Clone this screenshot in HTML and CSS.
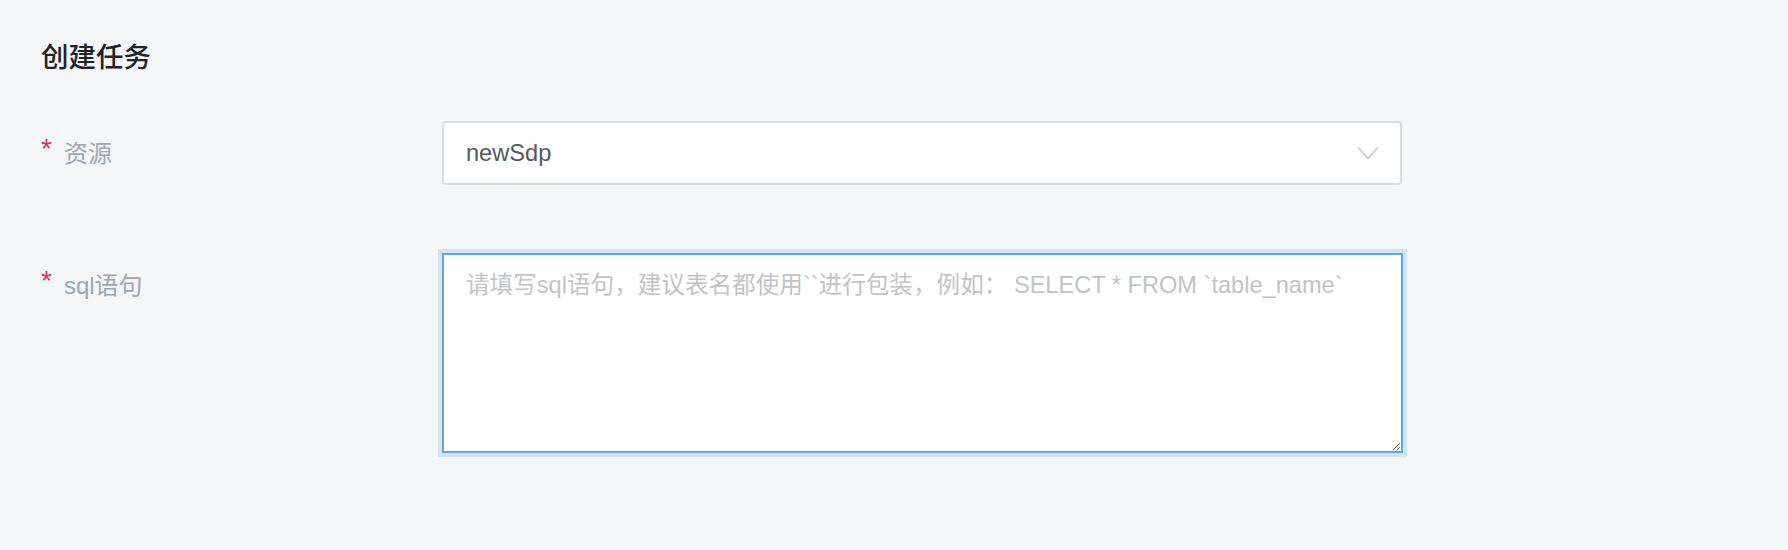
FILE: index.html
```html
<!DOCTYPE html>
<html lang="zh-CN">
<head>
<meta charset="utf-8">
<title>创建任务</title>
<link rel="stylesheet" href="styles.css">
</head>
<body>
<div class="page">
  <h1 class="title">创建任务</h1>
  <div class="row">
    <label class="label"><span class="req">*</span>资源</label>
    <div class="select">
      <span class="select-value">newSdp</span>
      <svg class="chevron" width="22" height="14" viewBox="0 0 22 14"><path d="M1 1.5 L11 12.5 L21 1.5" fill="none" stroke="#c3c6cc" stroke-width="1.6"/></svg>
    </div>
  </div>
  <div class="row row-sql">
    <label class="label"><span class="req">*</span>sql语句</label>
    <textarea class="sql" placeholder="请填写sql语句，建议表名都使用``进行包装，例如： SELECT * FROM `table_name`"></textarea>
  </div>
</div>
</body>
</html>
```
FILE: styles.css
```css
html, body {
  margin: 0;
  padding: 0;
  background: #f5f6f8;
  height: 100%;
}
body {
  font-family: "Liberation Sans", "Noto Sans CJK SC", sans-serif;
}
.page {
  padding: 38px 0 0 41px;
}
.title {
  margin: 0 0 43px 0;
  font-size: 27.5px;
  line-height: 40px;
  font-weight: 500;
  color: #1f2329;
}
.row {
  display: grid;
  grid-template-columns: 401px 960px;
  align-items: start;
}
.row-sql {
  margin-top: 68px;
}
.label {
  display: flex;
  align-items: center;
  height: 60px;
  font-size: 24px;
  color: #9ba6b8;
}
.req {
  color: #e0325f;
  margin-right: 12px;
  font-size: 28px;
  position: relative;
  top: -2px;
}
.select {
  box-sizing: border-box;
  height: 64px;
  background: #fff;
  border: 2px solid #dadbdd;
  border-radius: 4px;
  display: flex;
  align-items: center;
  justify-content: space-between;
  padding: 0 21px 0 22px;
  font-size: 23.6px;
  color: #555a61;
}
.chevron {
  display: block;
}
.sql {
  box-sizing: border-box;
  width: 961px;
  height: 200px;
  margin: 0;
  background: #fff;
  border: 2px solid #5ba9ea;
  border-radius: 0;
  box-shadow: 0 0 0 4px #d2e4f5;
  outline: none;
  padding: 12px 22px;
  font-family: "Liberation Sans", "Noto Sans CJK SC", sans-serif;
  font-size: 23.6px;
  line-height: 36px;
  color: #555a61;
  resize: vertical;
}
.sql::placeholder {
  color: #c2c3c5;
}
```
